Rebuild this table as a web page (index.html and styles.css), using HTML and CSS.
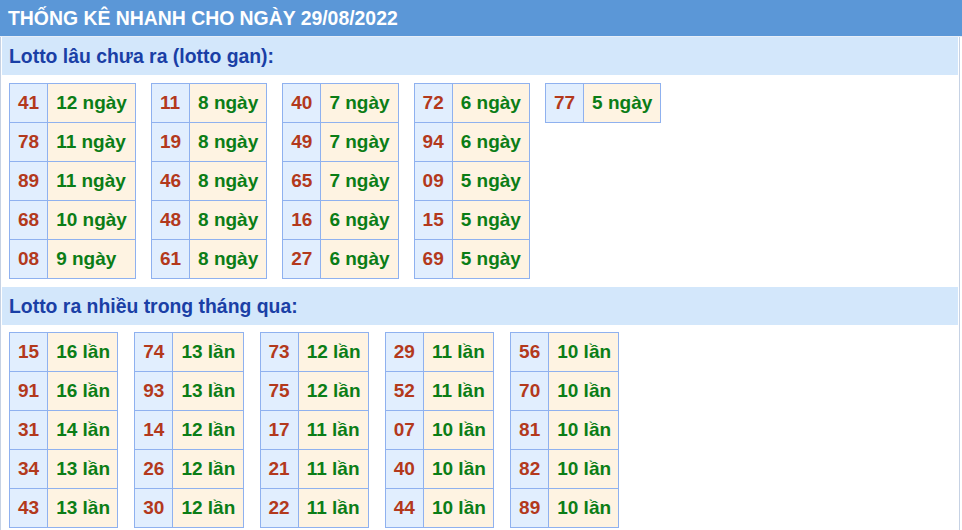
FILE: index.html
```html
<!DOCTYPE html>
<html lang="vi">
<head>
<meta charset="utf-8">
<title>Thống kê nhanh</title>
<link rel="stylesheet" href="styles.css">
</head>
<body>
<div class="title">THỐNG KÊ NHANH CHO NGÀY 29/08/2022</div>
<div class="box">
  <div class="sec-head">Lotto lâu chưa ra (lotto gan):</div>
  <div class="tables gan">
    <table>
      <tr><td class="num">41</td><td class="val">12 ngày</td></tr>
      <tr><td class="num">78</td><td class="val">11 ngày</td></tr>
      <tr><td class="num">89</td><td class="val">11 ngày</td></tr>
      <tr><td class="num">68</td><td class="val">10 ngày</td></tr>
      <tr><td class="num">08</td><td class="val">9 ngày</td></tr>
    </table>
    <table>
      <tr><td class="num">11</td><td class="val">8 ngày</td></tr>
      <tr><td class="num">19</td><td class="val">8 ngày</td></tr>
      <tr><td class="num">46</td><td class="val">8 ngày</td></tr>
      <tr><td class="num">48</td><td class="val">8 ngày</td></tr>
      <tr><td class="num">61</td><td class="val">8 ngày</td></tr>
    </table>
    <table>
      <tr><td class="num">40</td><td class="val">7 ngày</td></tr>
      <tr><td class="num">49</td><td class="val">7 ngày</td></tr>
      <tr><td class="num">65</td><td class="val">7 ngày</td></tr>
      <tr><td class="num">16</td><td class="val">6 ngày</td></tr>
      <tr><td class="num">27</td><td class="val">6 ngày</td></tr>
    </table>
    <table>
      <tr><td class="num">72</td><td class="val">6 ngày</td></tr>
      <tr><td class="num">94</td><td class="val">6 ngày</td></tr>
      <tr><td class="num">09</td><td class="val">5 ngày</td></tr>
      <tr><td class="num">15</td><td class="val">5 ngày</td></tr>
      <tr><td class="num">69</td><td class="val">5 ngày</td></tr>
    </table>
    <table>
      <tr><td class="num">77</td><td class="val">5 ngày</td></tr>
    </table>
  </div>
  <div class="sec-head">Lotto ra nhiều trong tháng qua:</div>
  <div class="tables nhieu">
    <table>
      <tr><td class="num">15</td><td class="val">16 lần</td></tr>
      <tr><td class="num">91</td><td class="val">16 lần</td></tr>
      <tr><td class="num">31</td><td class="val">14 lần</td></tr>
      <tr><td class="num">34</td><td class="val">13 lần</td></tr>
      <tr><td class="num">43</td><td class="val">13 lần</td></tr>
    </table>
    <table>
      <tr><td class="num">74</td><td class="val">13 lần</td></tr>
      <tr><td class="num">93</td><td class="val">13 lần</td></tr>
      <tr><td class="num">14</td><td class="val">12 lần</td></tr>
      <tr><td class="num">26</td><td class="val">12 lần</td></tr>
      <tr><td class="num">30</td><td class="val">12 lần</td></tr>
    </table>
    <table>
      <tr><td class="num">73</td><td class="val">12 lần</td></tr>
      <tr><td class="num">75</td><td class="val">12 lần</td></tr>
      <tr><td class="num">17</td><td class="val">11 lần</td></tr>
      <tr><td class="num">21</td><td class="val">11 lần</td></tr>
      <tr><td class="num">22</td><td class="val">11 lần</td></tr>
    </table>
    <table>
      <tr><td class="num">29</td><td class="val">11 lần</td></tr>
      <tr><td class="num">52</td><td class="val">11 lần</td></tr>
      <tr><td class="num">07</td><td class="val">10 lần</td></tr>
      <tr><td class="num">40</td><td class="val">10 lần</td></tr>
      <tr><td class="num">44</td><td class="val">10 lần</td></tr>
    </table>
    <table>
      <tr><td class="num">56</td><td class="val">10 lần</td></tr>
      <tr><td class="num">70</td><td class="val">10 lần</td></tr>
      <tr><td class="num">81</td><td class="val">10 lần</td></tr>
      <tr><td class="num">82</td><td class="val">10 lần</td></tr>
      <tr><td class="num">89</td><td class="val">10 lần</td></tr>
    </table>
  </div>
</div>
</body>
</html>
```
FILE: styles.css
```css
html, body {
  margin: 0;
  padding: 0;
  background: #ffffff;
  font-family: "Liberation Sans", Arial, sans-serif;
}
.title {
  height: 36px;
  line-height: 36px;
  background: #5b97d7;
  color: #ffffff;
  font-size: 19.4px;
  font-weight: bold;
  padding-left: 8px;
  border-bottom: 1px solid #e6eef8;
}
.box {
  width: 956px;
  border-left: 1px solid #c6d2e4;
  border-right: 1px solid #c6d2e4;
  padding: 0 1px;
}
.sec-head {
  height: 38px;
  line-height: 38px;
  background: #d3e7fb;
  color: #1a3fa6;
  font-size: 19.4px;
  font-weight: bold;
  padding-left: 7px;
}
.tables {
  display: flex;
  align-items: flex-start;
  gap: 15px;
  padding: 8px 7px 8px;
}
.nhieu {
  gap: 16px;
  padding-top: 7px;
}
table {
  border-collapse: collapse;
}
td {
  border: 1px solid #8fb1ef;
  height: 39px;
  box-sizing: border-box;
  padding: 0 8px;
  font-size: 19px;
  font-weight: bold;
  white-space: nowrap;
}
.num {
  background: #e1eefe;
  color: #b3391c;
}
.val {
  background: #fef3e2;
  color: #0b7d16;
}
.nhieu .val {
  padding-right: 7.25px;
}
```
